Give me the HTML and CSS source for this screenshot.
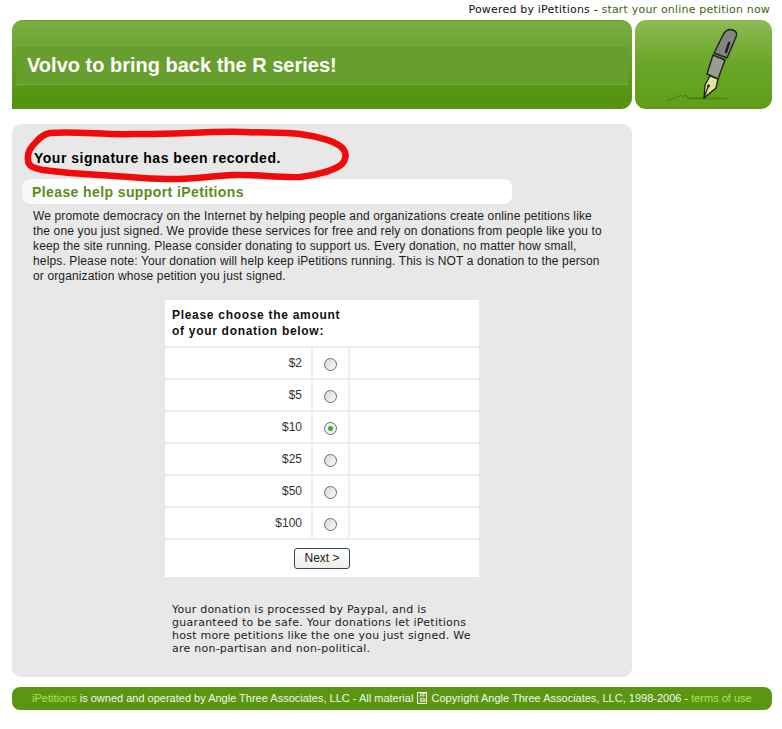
FILE: index.html
```html
<!DOCTYPE html>
<html lang="en">
<head>
  <meta charset="UTF-8">
  <title>Volvo to bring back the R series!</title>
  <link rel="stylesheet" href="styles.css">
</head>
<body>
  <div class="powered">Powered by iPetitions - <a href="#">start your online petition now</a></div>

  <div class="top">
    <div class="banner">
      <h1>Volvo to bring back the R series!</h1>
    </div>
    <div class="penbox">
      <svg width="137" height="89" viewBox="635 20 137 89">
        <ellipse cx="708" cy="98.5" rx="22" ry="1.2" fill="#4d8a0e"/>
        <path d="M666 101 L675 98 L679 96 L681 95 L683 97 L685 95 L689 98 L703 98" fill="none" stroke="#3f6d18" stroke-width=".7"/>
        <path d="M710 76 L718 79 L716 88 L704 98 L705 85 Z" fill="#e4e59a" stroke="#1c1c1c" stroke-width="1.3" stroke-linejoin="round"/>
        <path d="M704 98 L708 87" stroke="#1c1c1c" stroke-width="1.2"/>
        <circle cx="708.5" cy="86" r="1.4" fill="#1c1c1c"/>
        <path d="M713 55 L725 60 L718 79 L707 74 Z" fill="#9a9c94" stroke="#222" stroke-width="1.4" stroke-linejoin="round"/>
        <path d="M714 53 L724 33 Q728 28 733 30 Q738 32 736 37 L727 58 Z" fill="#83857d" stroke="#222" stroke-width="1.4" stroke-linejoin="round"/>
        <path d="M729 43 L726 52" stroke="#1c1c1c" stroke-width="2.4" stroke-linecap="round"/>
      </svg>
    </div>
  </div>

  <div class="main">
    <svg class="scribble" width="620" height="553" viewBox="12 124 620 553">
      <path d="M50 133 C75 131 105 135 133 134 C170 135 205 131 243 132 C265 133 285 132 300 134 C320 137 332 140 340 146 C347 151 347 158 342 164 C334 171 315 175 300 177 C278 178 255 174 233 175 C210 176 190 180 167 179 C145 179 122 176 100 175 C80 174 58 172 43 170 C33 168 28 166 28 160 C27 152 31 147 36 142 C40 137 45 134 50 133 Z" fill="none" stroke="#f20a0a" stroke-width="6.5"/>
    </svg>
    <p class="recorded">Your signature has been recorded.</p>
    <h2 class="help">Please help support iPetitions</h2>
    <p class="intro">We promote democracy on the Internet by helping people and organizations create online petitions like the one you just signed. We provide these services for free and rely on donations from people like you to keep the site running. Please consider donating to support us. Every donation, no matter how small, helps. Please note: Your donation will help keep iPetitions running. This is NOT a donation to the person or organization whose petition you just signed.</p>

    <form class="donate">
      <table>
        <colgroup>
          <col class="col-amt">
          <col class="col-pick">
          <col class="col-rest">
        </colgroup>
        <tr><th colspan="3">Please choose the amount<br>of your donation below:</th></tr>
        <tr><td class="amt">$2</td><td class="pick"><input type="radio" name="amount"></td><td></td></tr>
        <tr><td class="amt">$5</td><td class="pick"><input type="radio" name="amount"></td><td></td></tr>
        <tr><td class="amt">$10</td><td class="pick"><input type="radio" name="amount" checked></td><td></td></tr>
        <tr><td class="amt">$25</td><td class="pick"><input type="radio" name="amount"></td><td></td></tr>
        <tr><td class="amt">$50</td><td class="pick"><input type="radio" name="amount"></td><td></td></tr>
        <tr><td class="amt">$100</td><td class="pick"><input type="radio" name="amount"></td><td></td></tr>
        <tr><td class="next" colspan="3"><button type="button">Next &gt;</button></td></tr>
      </table>
    </form>

    <p class="paypal">Your donation is processed by Paypal, and is guaranteed to be safe. Your donations let iPetitions host more petitions like the one you just signed. We are non-partisan and non-political.</p>
  </div>

  <div class="footer"><a href="#">iPetitions</a> is owned and operated by Angle Three Associates, LLC - All material <span class="tofu">FF<br>E9</span> Copyright Angle Three Associates, LLC, 1998-2006 - <a href="#">terms of use</a></div>
</body>
</html>
```

FILE: styles.css
```css
* {
  box-sizing: border-box;
}
body {
  margin: 0;
  padding: 0 10px 0 12px;
  background-color: white;
  font-family: "Liberation Sans", Arial, sans-serif;
  font-size: 12px;
  color: #222;
}
.powered {
  height: 20px;
  padding: 3px 2px 0 0;
  text-align: right;
  font-family: "DejaVu Sans", sans-serif;
  font-size: 11px;
  line-height: 14px;
  letter-spacing: .19px;
  color: #111;
}
.powered a {
  color: #3c6414;
  text-decoration: none;
}

.top {
  display: flex;
  gap: 3px;
  height: 89px;
}
.banner {
  width: 620px;
  padding-top: 24px;
  background: linear-gradient(#7cae42, #63a024 45%, #559410 85%);
  border-top: 1px solid #659a2a;
  border-radius: 11px 11px 11px 0;
}
.banner h1 {
  margin: 0 4px;
  height: 40px;
  padding-left: 11px;
  background-color: #669f2e;
  border-top: 1px dotted #86b553;
  border-bottom: 1px dotted #86b553;
  font-size: 20px;
  line-height: 38px;
  color: white;
}
.penbox {
  width: 137px;
  background: linear-gradient(#8dba54, #6aa627 50%, #5f9e17);
  border-radius: 11px;
}
.penbox svg {
  display: block;
}

.main {
  position: relative;
  width: 620px;
  height: 553px;
  margin-top: 15px;
  padding: 26px 10px 0;
  background-color: #e8e8e8;
  border-radius: 9px;
}
.scribble {
  position: absolute;
  top: 0;
  left: 0;
}
.recorded {
  margin: 0 0 0 12px;
  height: 29px;
  font-size: 14px;
  font-weight: bold;
  line-height: 16px;
  letter-spacing: .51px;
  color: black;
}
.help {
  margin: 0;
  width: 490px;
  height: 25px;
  padding-left: 10px;
  background: linear-gradient(to right, #f6f6f6, white 6%);
  border-radius: 8px;
  font-size: 14px;
  line-height: 26px;
  letter-spacing: .4px;
  color: #5b8c20;
}
.intro {
  margin: 5px 0 0 11px;
  width: 572px;
  font-size: 12px;
  line-height: 15px;
  letter-spacing: .14px;
  color: #1c1c1c;
}

.donate {
  margin: 16px 0 0 143px;
}
.donate table {
  width: 314px;
  background-color: white;
  border-collapse: collapse;
  table-layout: fixed;
}
.col-amt {
  width: 147px;
}
.col-pick {
  width: 37px;
}
.col-rest {
  width: 130px;
}
.donate th {
  height: 47px;
  padding: 7px 7px 0;
  vertical-align: top;
  text-align: left;
  font-size: 12px;
  line-height: 16px;
  letter-spacing: .7px;
  color: #111;
}
.donate td {
  height: 32px;
  border: 2px solid #eeeeee;
  padding: 0;
}
.donate tr:first-child th {
  border-bottom: 2px solid #eeeeee;
}
.donate tr td:first-child {
  border-left: 0;
}
.donate tr td:last-child {
  border-right: 0;
}
.donate .amt {
  padding-right: 9px;
  text-align: right;
  font-size: 12px;
  color: #333;
}
.donate .pick {
  text-align: center;
}
.donate .next {
  height: 38px;
  border: 0;
  padding-bottom: 1px;
  text-align: center;
}
.donate input {
  appearance: none;
  display: inline-block;
  width: 13px;
  height: 13px;
  margin: 3px 0 0;
  vertical-align: middle;
  border: 1px solid #5a6f9a;
  border-radius: 50%;
  background: linear-gradient(135deg, #d8d8d0, #fbfbfb);
}
.donate input:checked {
  background: radial-gradient(circle, #3fa83a 0, #3fa83a 2px, #f0f0ea 3px);
}
.donate button {
  width: 56px;
  height: 21px;
  padding: 0;
  background: linear-gradient(#ffffff, #f0efe4);
  border: 1px solid #2c4a5e;
  border-radius: 3px;
  font-family: "Liberation Sans", Arial, sans-serif;
  font-size: 12px;
  color: #222;
}

.paypal {
  margin: 26px 0 0 150px;
  width: 303px;
  font-family: "DejaVu Sans", sans-serif;
  font-size: 11px;
  line-height: 13px;
  letter-spacing: .24px;
  color: #222;
}

.footer {
  height: 23px;
  margin-top: 10px;
  padding-left: 20px;
  background-color: #5a9612;
  border-radius: 8px;
  font-size: 11px;
  line-height: 23px;
  color: #f2f5ea;
  white-space: nowrap;
}
.footer a {
  color: #a8e35c;
  text-decoration: none;
}
.tofu {
  display: inline-block;
  width: 10px;
  height: 12px;
  margin: 0 1px;
  vertical-align: 0;
  border: 1px solid #f2f5ea;
  font-size: 5px;
  font-weight: bold;
  line-height: 5px;
  letter-spacing: -.5px;
  text-align: center;
}
```
